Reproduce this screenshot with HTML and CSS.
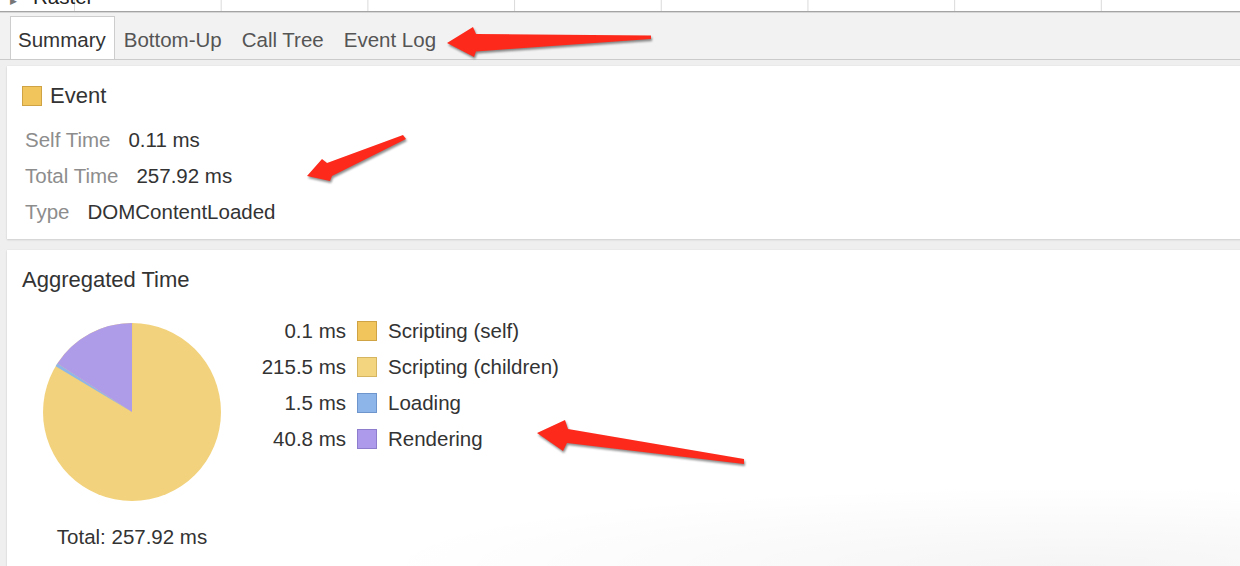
FILE: index.html
```html
<!DOCTYPE html>
<html lang="en">
<head>
<meta charset="utf-8">
<title>Summary</title>
<link rel="stylesheet" href="styles.css">
</head>
<body>
<div class="strip">
  <div class="strip-label"><span class="tri">&#9654;</span>Raster</div>
</div>
<nav class="tabbar">
  <div class="tab is-active">Summary</div>
  <div class="tab">Bottom-Up</div>
  <div class="tab">Call Tree</div>
  <div class="tab">Event Log</div>
</nav>
<main class="panes">
  <section class="card card-event">
    <div class="event-title"><span class="swatch sw-self"></span>Event</div>
    <div class="rows">
      <div class="row"><span class="lbl">Self Time</span><span>0.11 ms</span></div>
      <div class="row"><span class="lbl">Total Time</span><span>257.92 ms</span></div>
      <div class="row"><span class="lbl">Type</span><span>DOMContentLoaded</span></div>
    </div>
  </section>
  <section class="card card-agg">
    <h2 class="agg-title">Aggregated Time</h2>
    <div class="agg-body">
      <div class="pie-col">
        <svg class="pie" width="178" height="178" viewBox="0 0 178 178">
          <circle cx="89" cy="89" r="89" fill="#f2d27c"/>
          <path d="M89,89 L12.67,43.22 A89,89 0 0 1 14.40,40.46 Z" fill="#8fb6e8"/>
          <path d="M89,89 L14.40,40.46 A89,89 0 0 1 89,0 Z" fill="#af9ce9"/>
          <path d="M89,89 L89,0 A89,89 0 0 1 89.22,0 Z" fill="#f2c55c"/>
        </svg>
        <div class="total">Total: 257.92 ms</div>
      </div>
      <div class="legend">
        <span class="val">0.1 ms</span><span class="swatch sw-self"></span><span>Scripting (self)</span>
        <span class="val">215.5 ms</span><span class="swatch sw-children"></span><span>Scripting (children)</span>
        <span class="val">1.5 ms</span><span class="swatch sw-loading"></span><span>Loading</span>
        <span class="val">40.8 ms</span><span class="swatch sw-render"></span><span>Rendering</span>
      </div>
    </div>
  </section>
</main>
<svg class="annotations" width="1240" height="566" viewBox="0 0 1240 566">
  <polygon points="447,43 473,27 476,34 651,35.5 651,39 476,51.5 474,57"/>
  <polygon points="307,176 322,159 327,163 403,135 406,139 332,176 330,181"/>
  <polygon points="537,433 565,420 568,429 744,459 744,464 567,443 563,451"/>
</svg>
</body>
</html>
```
FILE: styles.css
```css
html, body {
  margin: 0;
  padding: 0;
}
body {
  position: relative;
  width: 1240px;
  height: 566px;
  overflow: hidden;
  background: #efefef;
  font-family: "Liberation Sans", Arial, sans-serif;
  color: #333;
  font-size: 20.5px;
}

/* timeline strip at top */
.strip {
  height: 11px;
  overflow: hidden;
  background-color: #fff;
  background-image: linear-gradient(to right, #dadada 0, #dadada 1px, transparent 1px);
  background-size: 146.7px 100%;
  background-position: 74px 0;
  border-bottom: 1px solid #a4a4a4;
}
.strip-label {
  margin-top: -15px;
  line-height: 24px;
  padding-left: 10px;
  color: #222;
  white-space: nowrap;
}
.tri {
  display: inline-block;
  font-size: 9px;
  color: #777;
  width: 23px;
}

/* tabs */
.tabbar {
  display: flex;
  align-items: flex-end;
  height: 46px;
  padding-left: 10px;
  background: #f2f2f2;
  border-top: 1px solid #d6d6d6;
  border-bottom: 1px solid #cbcbcb;
}
.tab {
  display: flex;
  align-items: center;
  box-sizing: border-box;
  height: 43px;
  padding: 3px 10px 0 7px;
  margin-right: 1px;
  border: 1px solid transparent;
  border-bottom: none;
  font-size: 20.5px;
  color: #555;
}
.tab.is-active {
  background: #fff;
  border-color: #cdcdcd;
  color: #333;
  padding-right: 8px;
}

/* panes */
.panes {
  padding-top: 6px;
}
.card {
  background: #fff;
  margin-left: 7px;
  margin-right: -20px;
  box-shadow: 0 1px 2px rgba(0, 0, 0, 0.13), 0 0 1px rgba(0, 0, 0, 0.08);
}
.card-event {
  height: 173px;
  box-sizing: border-box;
  padding: 17px 15px 9px;
}
.event-title {
  display: flex;
  align-items: center;
  gap: 8px;
  font-size: 22px;
  line-height: 26px;
}
.rows {
  margin-top: 13px;
  padding-left: 3px;
}
.row {
  line-height: 36px;
}
.lbl {
  color: #8d8d8d;
  margin-right: 18px;
}

.swatch {
  display: inline-block;
  box-sizing: border-box;
  width: 20px;
  height: 20px;
  border: 1px solid;
}
.sw-self { background: #f2c55c; border-color: #cfa244; }
.sw-children { background: #f3d47f; border-color: #d5b560; }
.sw-loading { background: #8eb5ea; border-color: #6e96cc; }
.sw-render { background: #ae9aea; border-color: #8e7ccc; }

.card-agg {
  margin-top: 11px;
  height: 316px;
  box-sizing: border-box;
  padding: 17px 15px;
  background-image: radial-gradient(ellipse 700px 80px at 85% 100%, rgba(0, 0, 0, 0.04), rgba(0, 0, 0, 0));
  background-repeat: no-repeat;
}
.agg-title {
  margin: 0;
  font-weight: normal;
  font-size: 22px;
  line-height: 26px;
}
.agg-body {
  display: flex;
  align-items: flex-start;
  margin-top: 20px;
}
.pie-col {
  width: 220px;
  display: flex;
  flex-direction: column;
  align-items: center;
}
.pie {
  display: block;
  margin-top: 10px;
}
.total {
  margin-top: 24px;
  line-height: 24px;
}
.legend {
  display: grid;
  grid-template-columns: 104px 20px auto;
  column-gap: 11px;
  align-items: center;
  line-height: 36px;
}
.val {
  text-align: right;
}

/* red annotation arrows overlaid on the screenshot */
.annotations {
  position: absolute;
  left: 0;
  top: 0;
  pointer-events: none;
  fill: #fd2a1c;
  filter: drop-shadow(1px 2px 1px rgba(0, 0, 0, 0.45));
}
```
